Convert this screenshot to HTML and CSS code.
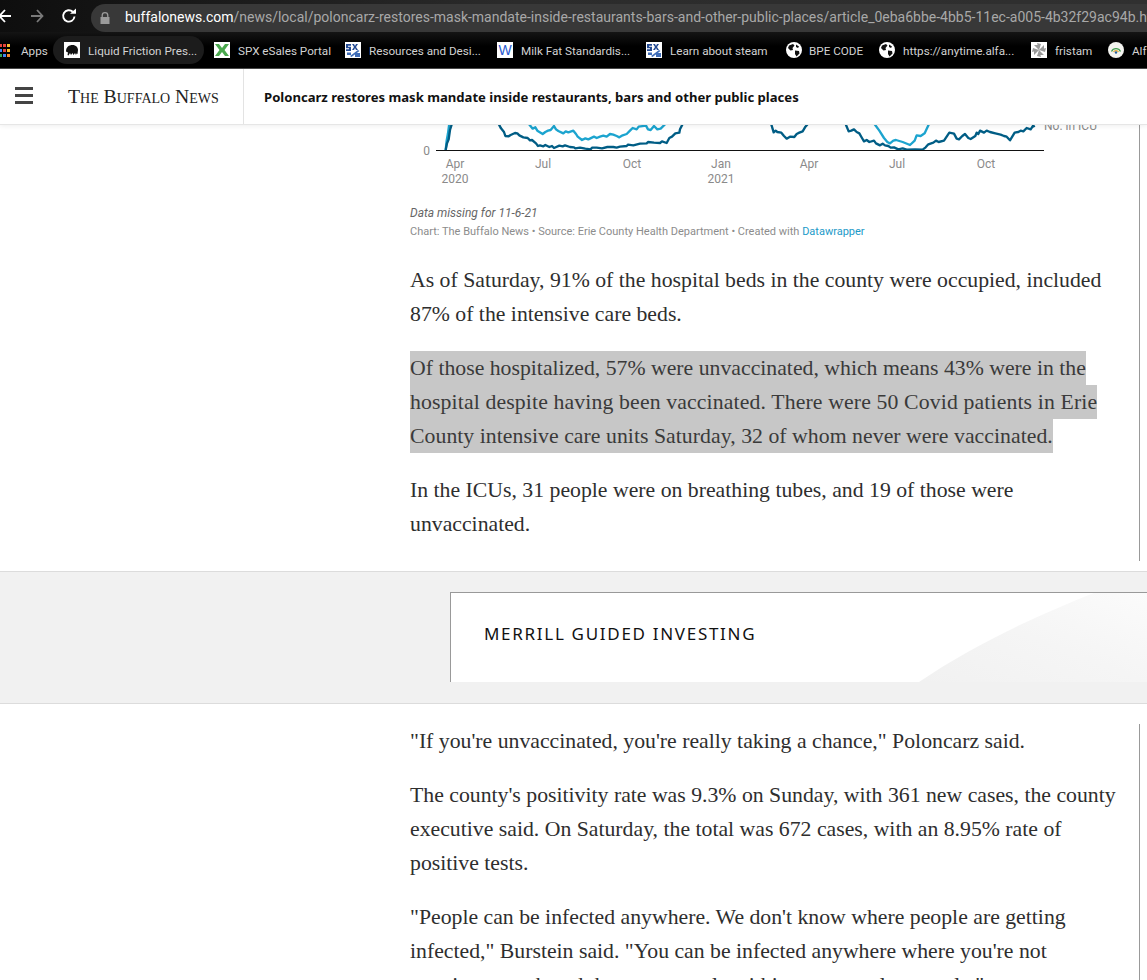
FILE: index.html
```html
<!DOCTYPE html>
<html lang="en">
<head>
<meta charset="utf-8">
<title>Poloncarz restores mask mandate</title>
<link rel="stylesheet" href="styles.css">
</head>
<body>
<svg class="defs" width="0" height="0" aria-hidden="true">
  <symbol id="globe" viewBox="0 0 16 16">
    <circle cx="8" cy="8" r="8" fill="#fff"/>
    <path d="M3 3.500 7 2l1.500 1.500L6.500 6 7 8 4.500 8.500 2 6zM9 8.500l4 .5 .5 2.500-3 3-1.500-2.500zM10 2.500l3 2-1 1.500-2-1z" fill="#111"/>
  </symbol>
  <symbol id="sxs" viewBox="0 0 16 16">
    <rect width="16" height="16" fill="#fff"/>
    <path d="M1 2h5v1.800H3v1h3V9H1V7.200h3v-1H1zM7 2h2l1 2 1-2h2l-2 3 2 3h-2l-1-2-1 2H7l2-3z" fill="#234a94"/>
    <path d="M5 14 13 8l1.500 1-8 6zM10 11h5v4h-5zM2 10.500h4v2.500H2z" fill="#3f6db8"/>
  </symbol>
</svg>

<header class="browser">
  <div class="toolbar">
    <svg class="tb-back" width="14" height="14" viewBox="0 0 14 14"><path d="M7 1 1.500 7 7 13M1.500 7H13" fill="none" stroke="#fff" stroke-width="1.800"/></svg>
    <svg class="tb-fwd" width="14" height="14" viewBox="0 0 14 14"><path d="M7 1l5.500 6L7 13M12.500 7H1" fill="none" stroke="#7a7a7a" stroke-width="1.800"/></svg>
    <svg class="tb-reload" width="16" height="16" viewBox="0 0 16 16"><path d="M13.500 8.500A5.700 5.700 0 1 1 11.800 3.800" fill="none" stroke="#fff" stroke-width="1.900"/><path d="M9 5.800h6V.5z" fill="#fff"/></svg>
    <div class="omnibox">
      <svg class="lock" width="10" height="12" viewBox="0 0 10 12"><path d="M2.200 5V3.500a2.800 2.800 0 0 1 5.600 0V5" fill="none" stroke="#9b9b9b" stroke-width="1.300"/><rect x=".5" y="5" width="9" height="7" fill="#9b9b9b"/></svg>
      <span class="url"><b>buffalonews.com</b>/news/local/poloncarz-restores-mask-mandate-inside-restaurants-bars-and-other-public-places/article_0eba6bbe-4bb5-11ec-a005-4b32f29ac94b.html</span>
    </div>
  </div>
  <nav class="bookmarks">
    <div class="apps">
      <svg class="apps-icon" width="12" height="13" viewBox="0 0 12 13">
        <rect x="0" y="0" width="3" height="3" fill="#e8453c"/><rect x="4" y="0" width="3" height="3" fill="#e8453c"/><rect x="8" y="0" width="3" height="3" fill="#f9bb2d"/>
        <rect x="0" y="5" width="3" height="3" fill="#4285f4"/><rect x="4" y="5" width="3" height="3" fill="#e8453c"/><rect x="8" y="5" width="3" height="3" fill="#f9bb2d"/>
        <rect x="0" y="10" width="3" height="3" fill="#34a853"/><rect x="4" y="10" width="3" height="3" fill="#4285f4"/><rect x="8" y="10" width="3" height="3" fill="#f9882d"/>
      </svg>
      <span class="bm-label">Apps</span>
    </div>
    <div class="bm bm-pill">
      <svg class="fav" viewBox="0 0 16 16"><rect width="16" height="16" fill="#fff"/><path d="M2 9.500C2 5 5 3 8.500 3S14 5.500 14 8l-.5 4-1-.5-.5 1.500-1-2-1.500 2-1-2-1.500 2-1-2-1.500 2.500-1-.5.500-2.500z" fill="#111"/></svg>
      <span class="bm-label">Liquid Friction Pres...</span>
    </div>
    <div class="bm bm-spx">
      <svg class="fav" viewBox="0 0 16 16"><rect width="16" height="16" fill="#fff"/><path d="M1 2h4l3 4 3-4h4L10.500 8 15 14h-4L8 10l-3 4H1l4.500-6z" fill="#4aa84e"/></svg>
      <span class="bm-label">SPX eSales Portal</span>
    </div>
    <div class="bm bm-res">
      <svg class="fav"><use href="#sxs"/></svg>
      <span class="bm-label">Resources and Desi...</span>
    </div>
    <div class="bm bm-milk">
      <span class="fav fav-w">W</span>
      <span class="bm-label">Milk Fat Standardis...</span>
    </div>
    <div class="bm bm-learn">
      <svg class="fav"><use href="#sxs"/></svg>
      <span class="bm-label">Learn about steam</span>
    </div>
    <div class="bm bm-bpe">
      <svg class="fav"><use href="#globe"/></svg>
      <span class="bm-label">BPE CODE</span>
    </div>
    <div class="bm bm-any">
      <svg class="fav"><use href="#globe"/></svg>
      <span class="bm-label">https://anytime.alfa...</span>
    </div>
    <div class="bm bm-fri">
      <svg class="fav" viewBox="0 0 16 16"><rect width="16" height="16" fill="#fff"/><path d="M8 8 6 1l4 1zM8 8l7-2-1 4zM8 8l2 7-4-1zM8 8l-7 2 1-4zM8 8l-5-5 4 0zM8 8l5-5 0 4zM8 8l5 5-4 0zM8 8l-5 5 0-4z" fill="#9a9a9a"/></svg>
      <span class="bm-label">fristam</span>
    </div>
    <div class="bm">
      <svg class="fav" viewBox="0 0 16 16"><circle cx="8" cy="8" r="8" fill="#f4f4f0"/><path d="M3.500 9.500a5 5 0 0 1 9 0" fill="none" stroke="#3d9a4a" stroke-width="1.200"/><path d="M5.500 10a3 3 0 0 1 5 0" fill="none" stroke="#e2a72e" stroke-width="1.200"/><circle cx="8" cy="10.500" r="1.200" fill="#27609c"/></svg>
      <span class="bm-label">Alf</span>
    </div>
  </nav>
</header>

<div class="sitebar">
  <button class="burger" aria-label="Menu"><i></i><i></i><i></i></button>
  <div class="logo">The Buffalo News</div>
  <h1 class="headline">Poloncarz restores mask mandate inside restaurants, bars and other public places</h1>
</div>

<main>
  <article class="col col-top">
    <svg class="chart" viewBox="410 125 729 79" width="729" height="79">
      <g fill="none" stroke-width="7" stroke-linejoin="round" transform="translate(400 110) scale(.33333)">
        <polyline class="light" points="137,120 140,92 144,70 148,40"/>
        <polyline class="dark" points="137,120 141,100 146,88 150,60 156,40"/>
        <polyline class="dark" points="295,40 303,55 312,66 316,78 326,79 332,75 345,69 352,70 358,76 370,82 383,84 390,91 396,90 408,100 414,108 420,106 430,109 436,105 448,111 456,108 462,114 478,107 488,109 495,106 510,111 522,112 526,115 540,113 556,116 572,118 576,113 590,113 606,115 622,111 640,111 650,113 660,110 680,108 684,104 700,106 720,101 740,100 744,96 762,98 780,99 786,94 800,99 808,84 816,80 826,70 838,68 840,58 848,42"/>
        <polyline class="light" points="385,40 398,56 406,52 412,62 428,72 436,66 444,62 452,60 462,48 468,58 475,63 490,70 497,64 505,67 520,62 528,72 533,80 546,90 556,85 565,88 582,80 590,84 600,80 610,77 620,80 630,72 640,74 650,78 658,82 668,76 680,72 690,62 698,54 710,58 716,50 738,47 744,58 752,60 762,48 772,58 782,56 798,40"/>
        <polyline class="dark" transform="translate(1080 0)" points="33,40 41,67 47,62 52,66 64,68 72,78 80,86 90,80 103,81 110,72 118,68 128,64 135,52 145,40"/>
        <polyline class="dark" transform="translate(1080 0)" points="256,40 266,64 274,62 282,58 290,66 298,70 306,84 312,94 320,90 328,96 342,92 348,100 360,106 368,101 375,106 385,108 392,113 402,112 415,118 428,115 440,119 465,118 488,119 497,112 505,103 520,98 528,92 536,96 552,92 560,80 568,68 582,71 590,86 597,88 607,78 615,72 625,84 632,87 646,78 650,68 655,72 660,62 672,68 680,62 690,66 706,70 722,74 732,78 740,80 750,91 764,68 775,66 782,62 790,64 800,54 812,58 820,46 823,52"/>
        <polyline class="light" transform="translate(1080 0)" points="342,40 358,62 372,84 382,96 390,100 400,92 408,90 428,96 450,105 464,92 470,76 482,78 494,70 507,42"/>
      </g>
      <line class="axis" x1="436" y1="150.500" x2="1044" y2="150.500"/>
      <g class="tick">
        <text x="430" y="155" text-anchor="end">0</text>
        <text x="455" y="168" text-anchor="middle">Apr</text>
        <text x="455" y="183" text-anchor="middle">2020</text>
        <text x="543" y="168" text-anchor="middle">Jul</text>
        <text x="632" y="168" text-anchor="middle">Oct</text>
        <text x="721" y="168" text-anchor="middle">Jan</text>
        <text x="721" y="183" text-anchor="middle">2021</text>
        <text x="809" y="168" text-anchor="middle">Apr</text>
        <text x="897" y="168" text-anchor="middle">Jul</text>
        <text x="986" y="168" text-anchor="middle">Oct</text>
        <text x="1044" y="130">No. in ICU</text>
      </g>
    </svg>
    <p class="note">Data missing for 11-6-21</p>
    <p class="source">Chart: The Buffalo News • Source: Erie County Health Department • Created with <a>Datawrapper</a></p>

    <div class="body body-first">
      <p><span class="ln">As of Saturday, 91% of the hospital beds in the county were occupied, included</span><span class="ln">87% of the intensive care beds.</span></p>
      <p class="selected"><span class="ln">Of those hospitalized, 57% were unvaccinated, which means 43% were in the</span><span class="ln ln-wide">hospital despite having been vaccinated. There were 50 Covid patients in Erie</span><span class="ln ln-wider">County intensive care units Saturday, 32 of whom never were vaccinated.</span></p>
      <p><span class="ln">In the ICUs, 31 people were on breathing tubes, and 19 of those were</span><span class="ln">unvaccinated.</span></p>
    </div>
  </article>

  <aside class="adband">
    <div class="adcard">
      <span class="adtitle">MERRILL GUIDED INVESTING</span>
      <svg class="adshape" width="228" height="89" viewBox="0 0 228 89" aria-hidden="true">
        <defs><linearGradient id="adg" x1="0" y1="1" x2="1" y2="0"><stop offset="0" stop-color="#f1f1f1"/><stop offset=".5" stop-color="#f5f5f5"/><stop offset="1" stop-color="#fbfbfb"/></linearGradient></defs>
        <path d="M0 89C60 48 125 20 175 0H228V89z" fill="url(#adg)"/>
      </svg>
    </div>
  </aside>

  <article class="col col-bottom">
    <div class="body">
      <p><span class="ln">"If you're unvaccinated, you're really taking a chance," Poloncarz said.</span></p>
      <p><span class="ln">The county's positivity rate was 9.3% on Sunday, with 361 new cases, the county</span><span class="ln">executive said. On Saturday, the total was 672 cases, with an 8.95% rate of</span><span class="ln">positive tests.</span></p>
      <p><span class="ln">"People can be infected anywhere. We don't know where people are getting</span><span class="ln">infected," Burstein said. "You can be infected anywhere where you're not</span><span class="ln">wearing a mask and there are people within ten to twelve people."</span></p>
    </div>
  </article>
</main>
</body>
</html>
```
FILE: styles.css
```css
* { box-sizing: border-box; }
html, body { margin: 0; padding: 0; height: 980px; overflow: hidden; background: #fff; }
body { font-family: Roboto, sans-serif; }
.defs { position: absolute; }

/* browser chrome */
.browser { height: 69px; background: #000; border-bottom: 1px solid #4a4a4a; overflow: hidden; }
.toolbar { height: 32px; display: flex; align-items: center; background: linear-gradient(90deg, #0e0e0e 0, #2b2b2b 45%, #303030 100%); }
.tb-back { margin-left: -2px; flex: none; }
.tb-fwd { margin-left: 18px; flex: none; }
.tb-reload { margin-left: 17px; flex: none; }
.omnibox { margin-left: 14px; flex: 1; min-width: 0; height: 28px; margin-top: 4px; background: #383838; border-radius: 14px 0 0 14px; display: flex; align-items: center; padding-left: 9px; overflow: hidden; }
.lock { flex: none; }
.url { margin-left: 15px; font: 14px/26px Roboto, sans-serif; padding-bottom: 2px; color: #a8a8a8; white-space: nowrap; }
.url b { font-weight: 400; color: #fff; }
.bookmarks { height: 36px; display: flex; align-items: center; font: 11.700px Roboto, sans-serif; color: #d2d2d2; white-space: nowrap; background: linear-gradient(180deg, #141414 0, #000 40%); }
.bm-label { padding-top: 2px; }
.apps { flex: none; width: 53px; display: flex; align-items: center; }
.apps-icon { margin-left: -1px; flex: none; }
.apps span { margin-left: 10px; }
.bm { flex: none; height: 28px; display: flex; align-items: center; padding: 0 11px; gap: 8px; }
.bm-pill { background: #1c1c1c; border-radius: 14px; width: 151px; margin-right: -1px; }
.bm-spx { width: 131px; }
.bm-res { width: 152px; }
.bm-milk { width: 149px; }
.bm-learn { width: 140px; }
.bm-bpe { width: 93px; gap: 7px; }
.bm-any { width: 152px; }
.bm-fri { width: 77px; }
.fav { width: 16px; height: 16px; flex: none; display: block; }
.fav-w { background: #fff; color: #2a5bd0; font: 400 14px/16px "Liberation Sans", sans-serif; text-align: center; }

/* site bar */
.sitebar { height: 56px; display: flex; align-items: stretch; background: #fff; border-bottom: 1px solid #e6e6e6; box-shadow: 0 1px 5px rgba(0,0,0,.07); position: relative; z-index: 2; }
.burger { position: absolute; left: 15px; top: 18px; width: 18px; height: 17px; padding: 0; border: 0; background: none; display: flex; flex-direction: column; justify-content: space-between; }
.burger i { display: block; height: 3px; background: #444; }
.logo { width: 244px; flex: none; padding-left: 68px; border-right: 1px solid #e3e3e3; font-family: "Liberation Serif", serif; font-variant: small-caps; font-size: 19.700px; line-height: 54px; color: #222; white-space: nowrap; }
.headline { margin: 0; padding-left: 20px; font: 700 13.100px/56px "Noto Sans", sans-serif; color: #111; white-space: nowrap; }

/* article */
.col { margin-left: 410px; width: 730px; border-right: 1px solid #999; }
.col-top { height: 436px; }
.col-bottom { height: 260px; margin-top: 20px; }
.chart { display: block; }
.chart .dark { stroke: #005d85; }
.chart .light { stroke: #1ca4cf; }
.axis { stroke: #111; stroke-width: 1; }
.tick text { font: 12px Roboto, sans-serif; fill: #8a8a8a; }
.note { margin: 0; font: italic 12px/18px Roboto, sans-serif; color: #666; }
.source { margin: 0; padding-top: 1px; font: 11px/18px Roboto, sans-serif; color: #8c8c8c; white-space: nowrap; }
.source a { color: #1d9ac8; }
.body { font-family: "Liberation Serif", serif; font-size: 21.750px; line-height: 34px; color: #2e2e2e; }
.body-first { margin-top: 22px; }
.body p { margin: 0 0 20px; }
.ln { display: block; width: fit-content; white-space: nowrap; }
.ln-wide { letter-spacing: .13px; }
.ln-wider { letter-spacing: .04px; }
.selected .ln { background: #c7c7c7; color: #3a3a3a; }

/* ad */
.adband { margin-top: 10px; height: 133px; background: #f1f1f1; border-top: 1px solid #dcdcdc; border-bottom: 1px solid #dcdcdc; padding: 20px 0 20px 450px; }
.adcard { height: 90px; background: #fff; border-top: 1px solid #999; border-left: 1px solid #999; padding: 30px 0 0 33px; position: relative; overflow: hidden; }
.adtitle { font: 400 17px/22px "Noto Sans", sans-serif; letter-spacing: 1.700px; color: #111; }
.adshape { position: absolute; right: 0; bottom: 0; }
```
